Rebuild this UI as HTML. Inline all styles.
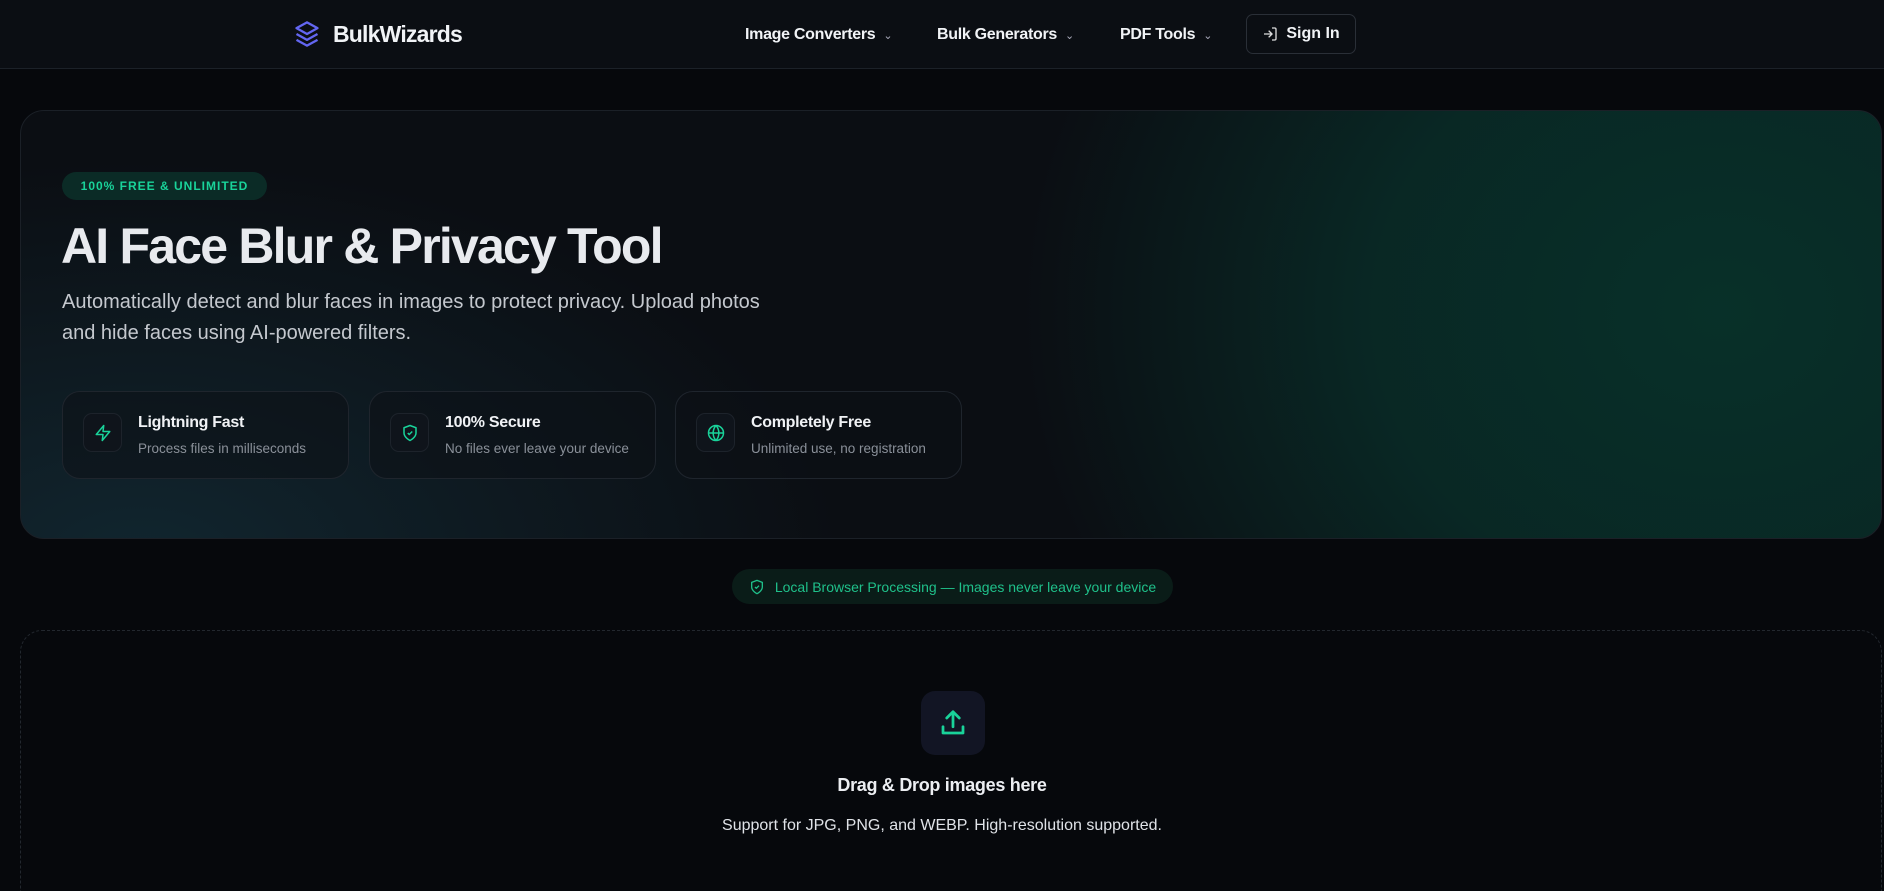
<!DOCTYPE html>
<html><head><meta charset="utf-8">
<style>
*{box-sizing:border-box;margin:0;padding:0}
html{width:1884px;height:891px;overflow:hidden}
body{width:1884px;height:891px;overflow:hidden;background:#06080c;font-family:"Liberation Sans",sans-serif;color:#e5e7eb;position:relative}
.nav{position:absolute;left:0;top:0;width:1884px;height:69px;background:#0b0e13;border-bottom:1px solid #1c2128}
.logo{position:absolute;left:293px;top:20px;display:flex;align-items:center;gap:12px;font-weight:700;font-size:23px;color:#f1f3f6;letter-spacing:-0.8px}
.menu{position:absolute;top:26px;font-size:16px;font-weight:700;color:#f1f3f6;letter-spacing:-0.3px}
.menu span{font-size:11px;color:#aab;margin-left:8px;font-weight:400}
.signin{position:absolute;left:1246px;top:14px;width:110px;height:40px;border:1px solid #2a2f37;border-radius:7px;display:flex;align-items:center;justify-content:center;gap:8px;font-size:16px;font-weight:700;color:#f1f3f6}
.hero{position:absolute;left:20px;top:110px;width:1862px;height:429px;border-radius:24px;border:1px solid #1b2027;overflow:hidden;
background:
radial-gradient(ellipse 700px 600px at 1700px 200px,rgba(8,50,42,0.95),rgba(8,48,42,0.75) 50%,rgba(8,40,40,0) 100%),
radial-gradient(ellipse 700px 400px at 120px 450px,rgba(18,42,52,0.85),rgba(18,42,52,0) 100%),
#0b0e13}
.badge{position:absolute;left:41px;top:61px;width:205px;height:28px;border-radius:14px;background:#0b2b26;color:#19d39a;font-size:12px;font-weight:700;letter-spacing:1px;display:flex;align-items:center;justify-content:center}
h1{position:absolute;left:40px;top:106px;font-size:50px;font-weight:700;color:#e8eaee;letter-spacing:-1.8px}
.sub{position:absolute;left:41px;top:176px;width:700px;font-size:20px;line-height:31px;color:#c4c8ce}
.feat{position:absolute;top:280px;width:287px;height:88px;border:1px solid #1f252d;border-radius:18px;background:rgba(12,16,22,0.55)}
.feat .ic{position:absolute;left:20px;top:21px;width:39px;height:39px;border-radius:9px;background:#0f141b;border:1px solid #1d232b;display:flex;align-items:center;justify-content:center}
.feat b{position:absolute;left:75px;top:22px;font-size:16px;color:#f0f2f5;letter-spacing:-0.3px}
.feat i{position:absolute;left:75px;top:49px;font-style:normal;font-size:13.5px;color:#8a9099}
.pill{position:absolute;left:732px;top:569px;width:441px;height:35px;border-radius:18px;background:#0a1c18;color:#1fc08a;font-size:14px;display:flex;align-items:center;justify-content:center;gap:10px}
.drop{position:absolute;left:20px;top:630px;width:1862px;height:290px;border:1.5px dashed #22272e;border-radius:22px}
.up{position:absolute;left:921px;top:691px;width:64px;height:64px;border-radius:14px;background:#121524;display:flex;align-items:center;justify-content:center}
.t1{position:absolute;left:0;width:1884px;text-align:center;top:775px;font-size:18px;font-weight:700;color:#eceef2;letter-spacing:-0.3px}
.t2{position:absolute;left:0;width:1884px;text-align:center;top:817px;font-size:16px;color:#e0e3e8}
</style></head><body>
<div class="nav">
<div class="logo"><svg width="28" height="28" viewBox="0 0 24 24" fill="none" stroke="#6366f1" stroke-width="2" stroke-linejoin="round"><path d="M12 2 3 7l9 5 9-5z"/><path d="M3 12l9 5 9-5"/><path d="M3 17l9 5 9-5"/></svg>BulkWizards</div>
<div class="menu" style="left:745px">Image Converters<span>&#8964;</span></div>
<div class="menu" style="left:937px">Bulk Generators<span>&#8964;</span></div>
<div class="menu" style="left:1120px">PDF Tools<span>&#8964;</span></div>
<div class="signin"><svg width="16" height="16" viewBox="0 0 24 24" fill="none" stroke="#ddd" stroke-width="2"><path d="M15 3h4a2 2 0 0 1 2 2v14a2 2 0 0 1-2 2h-4M10 17l5-5-5-5M15 12H3"/></svg>Sign In</div>
</div>
<div class="hero">
<div class="badge">100% FREE &amp; UNLIMITED</div>
<h1>AI Face Blur &amp; Privacy Tool</h1>
<div class="sub">Automatically detect and blur faces in images to protect privacy. Upload photos and hide faces using AI-powered filters.</div>
<div class="feat" style="left:41px"><div class="ic"><svg width="18" height="18" viewBox="0 0 24 24" fill="none" stroke="#19d39a" stroke-width="2" stroke-linejoin="round"><path d="M13 2 3 14h9l-1 8 10-12h-9z"/></svg></div><b>Lightning Fast</b><i>Process files in milliseconds</i></div>
<div class="feat" style="left:348px"><div class="ic"><svg width="18" height="18" viewBox="0 0 24 24" fill="none" stroke="#19d39a" stroke-width="2" stroke-linejoin="round"><path d="M12 22s8-4 8-10V5l-8-3-8 3v7c0 6 8 10 8 10z"/><path d="m9 12 2 2 4-4"/></svg></div><b>100% Secure</b><i>No files ever leave your device</i></div>
<div class="feat" style="left:654px"><div class="ic"><svg width="18" height="18" viewBox="0 0 24 24" fill="none" stroke="#19d39a" stroke-width="2"><circle cx="12" cy="12" r="10"/><path d="M2 12h20M12 2a15 15 0 0 1 0 20M12 2a15 15 0 0 0 0 20"/></svg></div><b>Completely Free</b><i>Unlimited use, no registration</i></div>
</div>
<div class="pill"><svg width="16" height="16" viewBox="0 0 24 24" fill="none" stroke="#1fc08a" stroke-width="2" stroke-linejoin="round"><path d="M12 22s8-4 8-10V5l-8-3-8 3v7c0 6 8 10 8 10z"/><path d="m9 12 2 2 4-4"/></svg>Local Browser Processing — Images never leave your device</div>
<div class="drop"></div>
<div class="up"><svg width="30" height="30" viewBox="0 0 24 24" fill="none" stroke="#19d39a" stroke-width="2.2" stroke-linecap="round" stroke-linejoin="round"><path d="M4 15v5h16v-5M12 15V3M7 8l5-5 5 5"/></svg></div>
<div class="t1">Drag &amp; Drop images here</div>
<div class="t2">Support for JPG, PNG, and WEBP. High-resolution supported.</div>
</body></html>
